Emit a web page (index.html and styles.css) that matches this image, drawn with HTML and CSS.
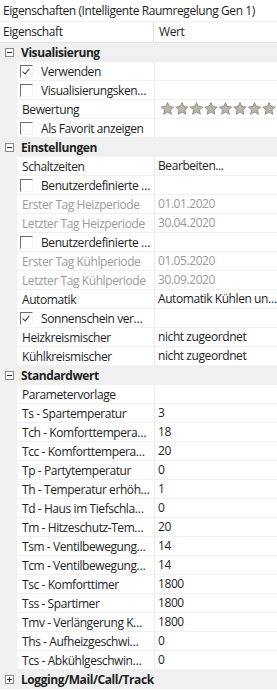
FILE: index.html
```html
<!DOCTYPE html>
<html lang="de">
<head>
<meta charset="utf-8">
<link rel="stylesheet" href="styles.css">
</head>
<body>
<div class="panel">
  <div class="title">Eigenschaften (Intelligente Raumregelung Gen 1)</div>
  <div class="header">
    <div class="h-name">Eigenschaft</div>
    <div class="h-val">Wert</div>
  </div>

  <div class="cat"><span class="box minus"></span><span class="cat-text">Visualisierung</span></div>
  <div class="row"><div class="gutter"></div><div class="name"><span class="chk on"></span><span class="lbl">Verwenden</span></div><div class="val"></div></div>
  <div class="row"><div class="gutter"></div><div class="name"><span class="chk"></span><span class="lbl">Visualisierungsken…</span></div><div class="val"></div></div>
  <div class="row"><div class="gutter"></div><div class="name"><span class="lbl">Bewertung</span></div><div class="val stars">
    <svg width="118" height="14" viewBox="0 0 118 14">
      <defs>
        <path id="st" d="M6.5 0.6 L8.3 4.6 L12.7 5 L9.4 7.9 L10.4 12.3 L6.5 10 L2.6 12.3 L3.6 7.9 L0.3 5 L4.7 4.6 Z"/>
      </defs>
      <g class="star-g">
        <use href="#st" x="0"/><use href="#st" x="14.5"/><use href="#st" x="29"/><use href="#st" x="43.5"/>
        <use href="#st" x="58"/><use href="#st" x="72.5"/><use href="#st" x="87"/><use href="#st" x="101.5"/>
      </g>
    </svg>
  </div></div>
  <div class="row"><div class="gutter"></div><div class="name"><span class="chk"></span><span class="lbl">Als Favorit anzeigen</span></div><div class="val"></div></div>

  <div class="cat"><span class="box minus"></span><span class="cat-text">Einstellungen</span></div>
  <div class="row"><div class="gutter"></div><div class="name"><span class="lbl">Schaltzeiten</span></div><div class="val">Bearbeiten...</div></div>
  <div class="row"><div class="gutter"></div><div class="name"><span class="chk"></span><span class="lbl">Benutzerdefinierte …</span></div><div class="val"></div></div>
  <div class="row dis"><div class="gutter"></div><div class="name"><span class="lbl">Erster Tag Heizperiode</span></div><div class="val">01.01.2020</div></div>
  <div class="row dis"><div class="gutter"></div><div class="name"><span class="lbl">Letzter Tag Heizperiode</span></div><div class="val">30.04.2020</div></div>
  <div class="row"><div class="gutter"></div><div class="name"><span class="chk"></span><span class="lbl">Benutzerdefinierte …</span></div><div class="val"></div></div>
  <div class="row dis"><div class="gutter"></div><div class="name"><span class="lbl">Erster Tag Kühlperiode</span></div><div class="val">01.05.2020</div></div>
  <div class="row dis"><div class="gutter"></div><div class="name"><span class="lbl">Letzter Tag Kühlperiode</span></div><div class="val">30.09.2020</div></div>
  <div class="row"><div class="gutter"></div><div class="name"><span class="lbl">Automatik</span></div><div class="val">Automatik Kühlen un…</div></div>
  <div class="row"><div class="gutter"></div><div class="name"><span class="chk on"></span><span class="lbl">Sonnenschein ver…</span></div><div class="val"></div></div>
  <div class="row"><div class="gutter"></div><div class="name"><span class="lbl">Heizkreismischer</span></div><div class="val">nicht zugeordnet</div></div>
  <div class="row"><div class="gutter"></div><div class="name"><span class="lbl">Kühlkreismischer</span></div><div class="val">nicht zugeordnet</div></div>

  <div class="cat"><span class="box minus"></span><span class="cat-text">Standardwert</span></div>
  <div class="row"><div class="gutter"></div><div class="name"><span class="lbl">Parametervorlage</span></div><div class="val"></div></div>
  <div class="row"><div class="gutter"></div><div class="name"><span class="lbl">Ts - Spartemperatur</span></div><div class="val">3</div></div>
  <div class="row"><div class="gutter"></div><div class="name"><span class="lbl">Tch - Komforttempera…</span></div><div class="val">18</div></div>
  <div class="row"><div class="gutter"></div><div class="name"><span class="lbl">Tcc - Komforttempera…</span></div><div class="val">20</div></div>
  <div class="row"><div class="gutter"></div><div class="name"><span class="lbl">Tp - Partytemperatur</span></div><div class="val">0</div></div>
  <div class="row"><div class="gutter"></div><div class="name"><span class="lbl">Th - Temperatur erhöh…</span></div><div class="val">1</div></div>
  <div class="row"><div class="gutter"></div><div class="name"><span class="lbl">Td - Haus im Tiefschla…</span></div><div class="val">0</div></div>
  <div class="row"><div class="gutter"></div><div class="name"><span class="lbl">Tm - Hitzeschutz-Tem…</span></div><div class="val">20</div></div>
  <div class="row"><div class="gutter"></div><div class="name"><span class="lbl">Tsm - Ventilbewegung…</span></div><div class="val">14</div></div>
  <div class="row"><div class="gutter"></div><div class="name"><span class="lbl">Tcm - Ventilbewegung…</span></div><div class="val">14</div></div>
  <div class="row"><div class="gutter"></div><div class="name"><span class="lbl">Tsc - Komforttimer</span></div><div class="val">1800</div></div>
  <div class="row"><div class="gutter"></div><div class="name"><span class="lbl">Tss - Spartimer</span></div><div class="val">1800</div></div>
  <div class="row"><div class="gutter"></div><div class="name"><span class="lbl">Tmv - Verlängerung K…</span></div><div class="val">1800</div></div>
  <div class="row"><div class="gutter"></div><div class="name"><span class="lbl">Ths - Aufheizgeschwi…</span></div><div class="val">0</div></div>
  <div class="row"><div class="gutter"></div><div class="name"><span class="lbl">Tcs - Abkühlgeschwin…</span></div><div class="val">0</div></div>

  <div class="cat"><span class="box plus"></span><span class="cat-text">Logging/Mail/Call/Track</span></div>
</div>
</body>
</html>
```

FILE: styles.css
```css
html, body {
  margin: 0;
  padding: 0;
  background: #ffffff;
}
body {
  font-family: "Open Sans", "Noto Sans", sans-serif;
  font-size: 12px;
  letter-spacing: -0.42px;
  color: #1e1e1e;
}
.panel {
  width: 277px;
  overflow: hidden;
}
.title {
  height: 21px;
  line-height: 22px;
  padding-left: 3px;
  white-space: nowrap;
  overflow: hidden;
  box-sizing: border-box;
}
.header {
  height: 22px;
  display: flex;
  border-top: 1px solid #f2f2f2;
  border-bottom: 1px solid #e3e3e3;
  box-sizing: border-box;
  line-height: 20px;
}
.h-name {
  width: 154px;
  padding-left: 3px;
  box-sizing: border-box;
  border-right: 1px solid #e3e3e3;
}
.h-val {
  padding-left: 5px;
}
.cat {
  height: 19px;
  background: #f0f0f0;
  display: flex;
  align-items: center;
  box-sizing: border-box;
}
.cat-text {
  font-weight: bold;
  margin-left: 7px;
  white-space: nowrap;
}
.box {
  width: 9px;
  height: 9px;
  margin-left: 5px;
  border: 1px solid #8a8a8a;
  box-sizing: border-box;
  background: #ffffff;
  position: relative;
  flex: none;
}
.box::before {
  content: "";
  position: absolute;
  left: 1px;
  top: 3px;
  width: 5px;
  height: 1px;
  background: #333;
}
.box.plus::after {
  content: "";
  position: absolute;
  left: 3px;
  top: 1px;
  width: 1px;
  height: 5px;
  background: #333;
}
.row {
  height: 19px;
  display: flex;
  box-sizing: border-box;
}
.gutter {
  width: 17px;
  background: #f0f0f0;
  flex: none;
}
.name {
  width: 137px;
  flex: none;
  display: flex;
  align-items: center;
  border-bottom: 1px solid #f0f0f0;
  box-sizing: border-box;
  overflow: hidden;
  white-space: nowrap;
}
.lbl {
  padding-left: 5px;
  white-space: nowrap;
}
.chk + .lbl {
  padding-left: 8px;
}
.val {
  flex: 1;
  border-left: 1px solid #ececec;
  border-bottom: 1px solid #f0f0f0;
  box-sizing: border-box;
  padding-left: 3px;
  line-height: 18px;
  white-space: nowrap;
  overflow: hidden;
}
.dis .lbl, .dis .val {
  color: #9a9a9a;
}
.chk {
  width: 13px;
  height: 13px;
  margin-left: 3px;
  box-sizing: border-box;
  border-top: 1px solid #6e6e6e;
  border-left: 1px solid #6e6e6e;
  border-right: 1px solid #f4f4f4;
  border-bottom: 1px solid #f4f4f4;
  position: relative;
  flex: none;
}
.chk.on::after {
  content: "";
  position: absolute;
  left: 3px;
  top: 1px;
  width: 3px;
  height: 6px;
  border-right: 1px solid #333;
  border-bottom: 1px solid #333;
  transform: rotate(40deg);
}
.stars {
  display: flex;
  align-items: center;
  padding-left: 6px;
}
.stars svg {
  display: block;
  flex: none;
}
.star-g {
  fill: #bab6aa;
  stroke: #8e8a7f;
  stroke-width: 0.9;
}
```
